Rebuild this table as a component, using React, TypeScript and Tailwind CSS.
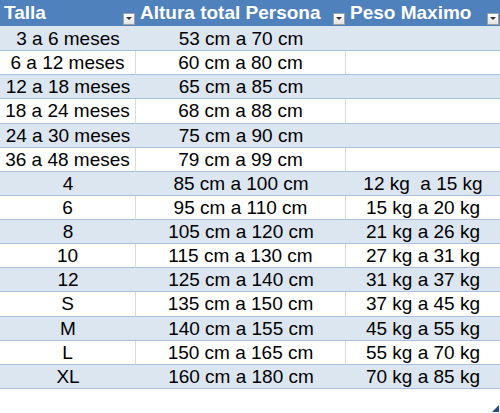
import React from "react";

const rows: [string, string, string][] = [
  ["3 a 6 meses", "53 cm a 70 cm", ""],
  ["6 a 12 meses", "60 cm a 80 cm", ""],
  ["12 a 18 meses", "65 cm a 85 cm", ""],
  ["18 a 24 meses", "68 cm a 88 cm", ""],
  ["24 a 30 meses", "75 cm a 90 cm", ""],
  ["36 a 48 meses", "79 cm a 99 cm", ""],
  ["4", "85 cm a 100 cm", "12 kg\u00a0 a 15 kg"],
  ["6", "95 cm a 110 cm", "15 kg a 20 kg"],
  ["8", "105 cm a 120 cm", "21 kg a 26 kg"],
  ["10", "115 cm a 130 cm", "27 kg a 31 kg"],
  ["12", "125 cm a 140 cm", "31 kg a 37 kg"],
  ["S", "135 cm a 150 cm", "37 kg a 45 kg"],
  ["M", "140 cm a 155 cm", "45 kg a 55 kg"],
  ["L", "150 cm a 165 cm", "55 kg a 70 kg"],
  ["XL", "160 cm a 180 cm", "70 kg a 85 kg"],
];

function Drop() {
  return (
    <span className="absolute right-[1px] bottom-[1px] w-[12px] h-[12px] border border-[#a0a0a0] bg-gradient-to-b from-[#ffffff] to-[#e4e4e4] flex items-center justify-center">
      <svg width="6" height="4" viewBox="0 0 6 4">
        <path d="M0 0 L6 0 L3 3 Z" fill="#333" />
      </svg>
    </span>
  );
}

export default function App() {
  const head = "relative bg-[#4f81bd] text-white font-bold pl-[4px] flex items-center border-b border-[#dce6f1]";
  return (
    <div
      className="w-[500px] h-[413px] bg-white grid grid-cols-[136px_210px_154px] grid-rows-[27px_repeat(16,1fr)] text-[19px] text-black relative overflow-hidden"
      style={{ fontFamily: '"Liberation Sans", Arial, sans-serif' }}
    >
      <div className={head}>
        <span className="leading-none pb-[1px]">Talla</span>
        <Drop />
      </div>
      <div className={head}>
        <span className="leading-none pb-[1px]">Altura total Persona</span>
        <Drop />
      </div>
      <div className={head}>
        <span className="leading-none pb-[1px]">Peso Maximo</span>
        <Drop />
      </div>
      {rows.map((r, i) => {
        const band = i % 2 === 0;
        const base =
          "flex items-center justify-center border-b border-[#a9c1df] leading-none " +
          (band ? "bg-[#dce6f1]" : "bg-white");
        const vr = band ? "" : " border-r border-r-[#dadada]";
        return (
          <React.Fragment key={i}>
            <div className={base + vr}>{r[0]}</div>
            <div className={base + vr}>{r[1]}</div>
            <div className={base + " whitespace-pre"}>{r[2]}</div>
          </React.Fragment>
        );
      })}
      <svg className="absolute right-[1px] bottom-[1px]" width="7" height="7" viewBox="0 0 7 7">
        <path d="M7 0 L7 7 L0 7 Z" fill="#1f4e8c" />
      </svg>
    </div>
  );
}
